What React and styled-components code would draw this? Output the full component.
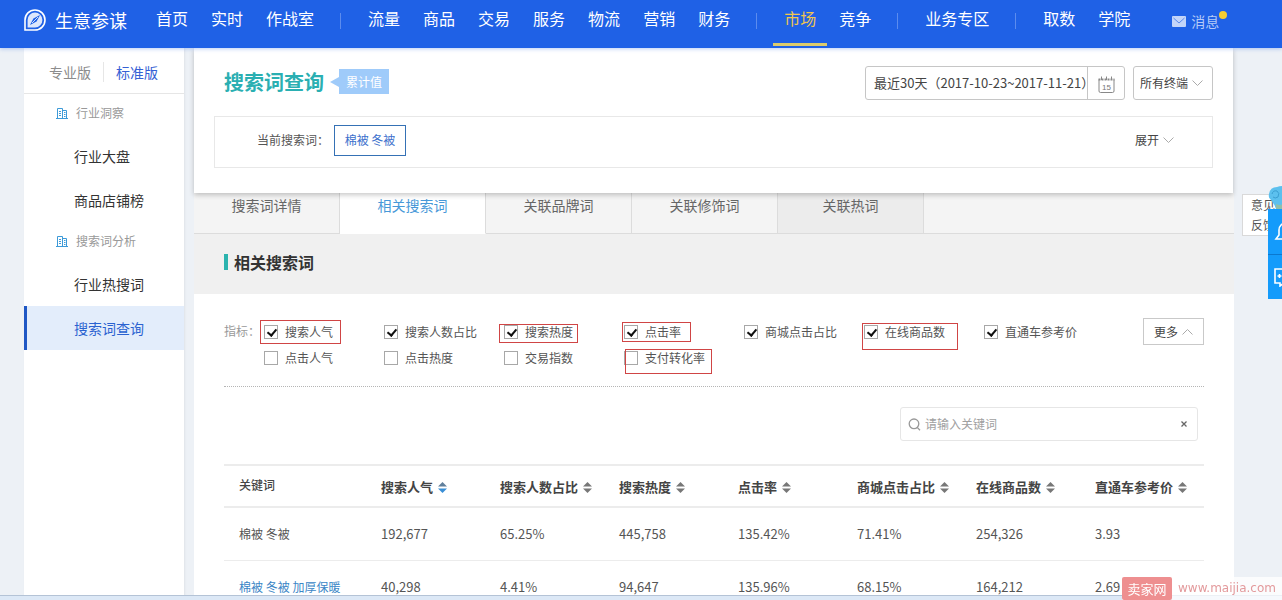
import React, { useState } from 'react';
import styled, { createGlobalStyle } from 'styled-components';

const GlobalStyle = createGlobalStyle`
  * {
    box-sizing: border-box;
  }

  body {
    margin: 0;
    background: #edf1f6;
    color: #333;
    font-family: "Noto Sans CJK SC", sans-serif;
    font-size: 12px;
    line-height: 20px;
  }

  a {
    color: inherit;
    text-decoration: none;
  }

  button, input, select {
    margin: 0;
    padding: 0;
    border: 0;
    background: none;
    color: inherit;
    font: inherit;
  }

  svg {
    display: block;
    flex: none;
  }
`;

const Page = styled.div`
  height: 100vh;
  overflow: hidden;
  display: flex;
  flex-direction: column;
`;

/* ---------- top bar ---------- */

const TopBar = styled.header`
  display: flex;
  flex: none;
  height: 48px;
  padding-left: 24px;
  background: #1f61e6;
  color: #fff;
  white-space: nowrap;
  z-index: 3;
  box-shadow: 0 1px 4px rgba(31, 97, 230, 0.3);
`;

const Logo = styled.a`
  display: flex;
  align-items: center;
  gap: 9px;
  width: 121px;
  height: 40px;
  font-size: 18px;
`;

const Nav = styled.nav`
  display: flex;
  gap: 1px;
`;

const NavItem = styled.a`
  height: 46px;
  padding: 0 11px;
  font-size: 16px;
  line-height: 37px;
  color: ${props => (props.$active ? '#f0c64f' : '#fff')};
  border-bottom: 3px solid ${props => (props.$active ? '#dccb6c' : 'transparent')};
`;

const NavDivider = styled.span`
  width: 1px;
  height: 16px;
  margin: 13px 15px 0 14px;
  background: #5c8cee;
`;

const Message = styled.a`
  position: relative;
  display: flex;
  align-items: center;
  gap: 5px;
  height: 42px;
  margin-left: 31px;
  font-size: 14px;
  color: #b5cbf7;
`;

const Dot = styled.i`
  position: absolute;
  top: 11px;
  right: -8px;
  width: 8px;
  height: 8px;
  border-radius: 50%;
  background: #f5cd30;
`;

/* ---------- side menu ---------- */

const Body = styled.div`
  display: flex;
  flex: 1;
  gap: 10px;
  min-height: 0;
  padding: 0 49px 0 24px;
`;

const Side = styled.aside`
  flex: none;
  width: 160px;
  background: #fff;
  box-shadow: 1px 0 2px rgba(0, 0, 0, 0.06);
`;

const Versions = styled.div`
  display: flex;
  align-items: center;
  height: 46px;
  padding: 2px 0 0 13px;
  border-bottom: 1px solid #e6e6e6;
`;

const Version = styled.a`
  padding: 0 12px;
  font-size: 14px;
  color: ${props => (props.$active ? '#3560d4' : '#8c8c8c')};

  & + & {
    border-left: 1px solid #e6e6e6;
  }
`;

const GroupTitle = styled.div`
  display: flex;
  align-items: center;
  gap: 8px;
  height: 40px;
  padding: 0 0 2px 32px;
  color: #999;
`;

const MenuItem = styled.a`
  display: block;
  height: 44px;
  padding-left: 47px;
  border-left: 3px solid ${props => (props.$active ? '#1f57c4' : 'transparent')};
  background: ${props => (props.$active ? '#e3edfb' : 'transparent')};
  color: ${props => (props.$active ? '#2a62d0' : '#333')};
  font-size: 14px;
  line-height: 44px;
`;

/* ---------- main head ---------- */

const Main = styled.main`
  flex: 1;
  min-width: 0;
  display: flex;
  flex-direction: column;
`;

const Head = styled.section`
  position: relative;
  z-index: 1;
  padding: 18px 20px 25px;
  background: #fff;
  box-shadow: 0 2px 5px rgba(0, 0, 0, 0.22);
`;

const HeadRow = styled.div`
  display: flex;
  align-items: center;
  height: 34px;
  padding-left: 10px;
`;

const TitleGroup = styled.div`
  display: flex;
  align-items: center;
  padding-bottom: 3px;
`;

const PageTitle = styled.h1`
  margin: 0;
  font-size: 20px;
  font-weight: bold;
  color: #2aafb2;
`;

const Badge = styled.span`
  display: flex;
  align-items: center;
  margin-left: 6px;
  color: #fff;

  &::before {
    content: '';
    border: 5px solid transparent;
    border-right: 9px solid #9fcbfa;
    border-left: 0;
  }

  span {
    padding: 0 7px;
    background: #9fcbfa;
    line-height: 25px;
  }
`;

const DateBox = styled.div`
  display: flex;
  width: 260px;
  height: 34px;
  margin-left: auto;
  border: 1px solid #c6c6c6;
  border-radius: 3px;
`;

const DateInput = styled.input`
  flex: 1;
  min-width: 0;
  padding-left: 8px;
  font-size: 13px;
  color: #444;
`;

const CalendarButton = styled.button`
  display: flex;
  align-items: center;
  justify-content: center;
  width: 37px;
  padding-top: 3px;
  border-left: 1px solid #c6c6c6;
`;

const SelectBox = styled.label`
  display: flex;
  align-items: center;
  width: 80px;
  height: 34px;
  margin-left: 8px;
  padding: 0 9px 0 6px;
  border: 1px solid #c6c6c6;
  border-radius: 3px;
`;

const Select = styled.select`
  flex: 1;
  min-width: 0;
  appearance: none;
  color: #444;
`;

const Condition = styled.div`
  display: flex;
  align-items: center;
  height: 52px;
  margin-top: 16px;
  padding: 0 38px 4px 42px;
  border: 1px solid #e8e8e8;
  color: #555;
`;

const Tag = styled.button`
  min-width: 72px;
  height: 31px;
  margin-left: 5px;
  padding: 0 8px;
  border: 1px solid #3571b5;
  color: #3c70cc;
`;

const Expand = styled.button`
  display: flex;
  align-items: center;
  gap: 4px;
  margin-left: auto;
  color: #444;
`;

/* ---------- tabs ---------- */

const Tabs = styled.nav`
  display: flex;
  flex: none;
  height: 41px;
  margin-right: -1px;
  background: #f4f4f4;
  box-shadow: inset 0 -1px #dcdcdc;
`;

const Tab = styled.a`
  width: 146px;
  border-right: 1px solid #dcdcdc;
  border-bottom: 1px solid ${props => (props.$active ? '#fff' : '#dcdcdc')};
  background: ${props => (props.$active ? '#fff' : props.$dark ? '#ececec' : '#f4f4f4')};
  color: ${props => (props.$active ? '#4798d8' : '#666')};
  font-size: 14px;
  line-height: 24px;
  text-align: center;
`;

const SectionTitle = styled.h2`
  display: flex;
  align-items: center;
  gap: 6px;
  flex: none;
  height: 60px;
  margin: 0 -1px 0 0;
  padding: 0 30px 5px;
  background: #f0f0f0;
  font-size: 16px;
  font-weight: bold;

  &::before {
    content: '';
    width: 4px;
    height: 16px;
    background: #2bb3ae;
  }
`;

const Content = styled.section`
  flex: 1;
  margin-right: -1px;
  padding: 24px 30px 0;
  background: #fff;
`;

/* ---------- metrics ---------- */

const Metrics = styled.div`
  display: flex;
  align-items: flex-start;
  height: 69px;
  border-bottom: 1px dotted #b5b5b5;
`;

const MetricsLabel = styled.span`
  width: 40px;
  line-height: 26px;
  color: #999;
`;

const MetricGrid = styled.div`
  display: grid;
  grid-template-columns: repeat(7, 120px);
  grid-auto-rows: 26px;
  padding-top: 1px;
`;

const MetricCell = styled.div`
  position: relative;
`;

const Metric = styled.label`
  display: flex;
  align-items: center;
  gap: 7px;
  height: 26px;
  color: #555;
`;

const Checkbox = styled.input`
  appearance: none;
  width: 14px;
  height: 14px;
  border: 1px solid #a8a8a8;
  background: #fff;

  &:checked::after {
    content: '';
    display: block;
    width: 4px;
    height: 7px;
    margin: 1px 0 0 4px;
    border: solid #111;
    border-width: 0 2px 2px 0;
    transform: rotate(40deg);
  }
`;

// red frame drawn over a recommended metric
const Mark = styled.i`
  position: absolute;
  top: ${props => props.$top}px;
  left: ${props => props.$left}px;
  width: ${props => props.$width}px;
  height: ${props => props.$height}px;
  border: 1px solid #d04545;
  pointer-events: none;
`;

const MoreButton = styled.button`
  display: flex;
  align-items: center;
  justify-content: center;
  gap: 4px;
  width: 61px;
  height: 27px;
  margin-left: auto;
  border: 1px solid #c9c9c9;
  color: #444;
`;

/* ---------- search ---------- */

const SearchBox = styled.label`
  display: flex;
  align-items: center;
  gap: 4px;
  width: 298px;
  height: 34px;
  margin: 20px 6px 23px auto;
  padding: 0 10px 0 7px;
  border: 1px solid #e6e6e6;
  border-radius: 3px;
`;

const SearchInput = styled.input`
  flex: 1;
  min-width: 0;
  outline: none;

  &::placeholder {
    color: #a0a0a0;
  }
`;

const ClearButton = styled.button`
  color: #555;
`;

/* ---------- table ---------- */

const Table = styled.table`
  width: 100%;
  table-layout: fixed;
  border-collapse: collapse;
  font-size: 13px;
  color: #555;
  white-space: nowrap;

  th, td {
    padding: 0;
    text-align: left;
  }

  th {
    width: 119px;
    height: 42px;
    border-top: 2px solid #ececec;
    border-bottom: 2px solid #ececec;
    color: #444;
  }

  th:first-child {
    width: 157px;
    padding: 0 0 2px 15px;
    font-size: 12px;
    font-weight: 500;
  }

  th:last-child {
    width: auto;
  }

  td {
    height: 53px;
    border-bottom: 1px solid #ececec;
  }

  td:first-child {
    padding-left: 15px;
    font-size: 12px;
  }
`;

const SortButton = styled.button`
  display: flex;
  align-items: center;
  gap: 5px;
  padding-top: 2px;
  font-weight: bold;
`;

const KeywordLink = styled.a`
  color: #3b86c6;
`;

/* ---------- floating parts ---------- */

const Float = styled.div`
  position: fixed;
  top: 186px;
  right: 0;
  width: 40px;
  height: 114px;
  overflow: hidden;
`;

const Feedback = styled.a`
  position: absolute;
  top: 8px;
  left: 0;
  width: 42px;
  padding: 0 8px;
  border: 1px solid #d9d9d9;
  background: #fff;
  color: #555;
`;

const FloatTools = styled.div`
  position: absolute;
  top: 0;
  left: 26px;
  width: 44px;
`;

const ToolButton = styled.button`
  display: block;
  width: 44px;
  height: 45px;
  padding-left: 6px;
  background: #149bfb;

  & + & {
    border-top: 1px solid #0b78cf;
  }
`;

const BottomEdge = styled.div`
  position: fixed;
  right: 0;
  bottom: 0;
  left: 0;
  height: 5px;
  border-top: 1px solid #b4c3d6;
  background: #dce8f6;
`;

const Watermark = styled.div`
  position: fixed;
  right: 0;
  bottom: 0;
  display: flex;
  width: 160px;
  height: 23px;
  background: rgba(255, 255, 255, 0.75);
  color: #e39a9c;
  font-family: "DejaVu Sans", sans-serif;
  font-size: 12px;
  line-height: 23px;

  b {
    width: 50px;
    margin-right: 6px;
    border-radius: 2px;
    background: #ee8f90;
    color: #fff;
    font-family: "Noto Sans CJK SC", sans-serif;
    font-size: 13px;
    font-weight: normal;
    text-align: center;
  }
`;

/* ---------- icons ---------- */

const LogoIcon = () => (
  <svg width="22" height="22" viewBox="0 0 22 22" fill="none">
    <path d="M1 21V11A10 10 0 1 1 11 21Z" stroke="#fff" strokeWidth="1.6" />
    <path d="M3.6 18.4V11A7.4 7.4 0 1 1 11 18.4Z" fill="#fff" fillOpacity="0.85" />
    <path d="M16 6L12.6 12.6L6 16L9.4 9.4Z" fill="#1f61e6" />
    <path d="M8 14L14 8" stroke="#fff" strokeWidth="0.8" />
  </svg>
);

const MailIcon = () => (
  <svg width="14" height="11" viewBox="0 0 14 11">
    <rect width="14" height="11" rx="1" fill="#c3d5f9" />
    <path d="M1.5 2L7 7L12.5 2" fill="none" stroke="#5a89ec" />
  </svg>
);

const BuildingIcon = () => (
  <svg width="12" height="12" viewBox="0 0 12 12" fill="none" stroke="#3d9ad8">
    <path d="M0 11.5H12M1.5 11.5V1.5H6.5V11.5M6.5 3.5H10.5V11.5M3 4.5H5M3 6.5H5M3 8.5H5M8 5.5H9.5M8 7.5H9.5M8 9.5H9.5" />
  </svg>
);

const Chevron = ({ up }) => (
  <svg width="11" height="6" viewBox="0 0 11 6" fill="none" stroke="#aaa">
    <path d={up ? 'M0.5 5.5L5.5 0.5L10.5 5.5' : 'M0.5 0.5L5.5 5.5L10.5 0.5'} />
  </svg>
);

const CalendarIcon = () => (
  <svg width="17" height="17" viewBox="0 0 17 17" fill="none" stroke="#888">
    <path d="M1 3.5V15Q1 16.5 2.5 16.5H14.5Q16 16.5 16 15V3.5" />
    <path d="M0.5 3.5H16.5" strokeWidth="2" strokeDasharray="2 1" />
    <path d="M3.5 0.5V4M8.5 0.5V4M13.5 0.5V4" />
    <text x="8.5" y="14" fontSize="8" textAnchor="middle" fill="#777" stroke="none" fontFamily="Liberation Sans, sans-serif">15</text>
  </svg>
);

const SearchIcon = () => (
  <svg width="13" height="13" viewBox="0 0 13 13" fill="none" stroke="#999" strokeWidth="1.3">
    <circle cx="6" cy="5.8" r="4.8" />
    <path d="M9.2 9.4L12 12.3" />
  </svg>
);

const ClearIcon = () => (
  <svg width="6" height="6" viewBox="0 0 6 6" stroke="#666" strokeWidth="1.3">
    <path d="M0.5 0.5L5.5 5.5M5.5 0.5L0.5 5.5" />
  </svg>
);

const SortIcon = ({ active }) => (
  <svg width="9" height="11" viewBox="0 0 9 11">
    <path d="M4.5 0L9 4.5H0Z" fill={active ? '#607f9c' : '#777'} />
    <path d="M4.5 11L0 6.5H9Z" fill={active ? '#3a8fd6' : '#777'} />
  </svg>
);

const ElephantIcon = () => (
  <svg width="30" height="23" viewBox="0 0 30 23">
    <path d="M1 8Q2 1 9 1Q14 -1 20 1Q28 3 28 12V23H8Q7 19 3 14Q0 12 1 8Z" fill="#5cc0ee" />
    <path d="M4 8Q5 4 9 5Q12 7 10 11Q7 13 5 11" fill="none" stroke="#3a9fd2" />
    <path d="M8 18Q12 20 15 18V23H8Z" fill="#90bfa9" />
  </svg>
);

const BellIcon = () => (
  <svg width="24" height="24" viewBox="0 0 24 24" fill="none" stroke="#fff" strokeWidth="1.6">
    <path d="M2 19H22L19 15V10A7 7 0 0 0 5 10V15ZM9 20Q12 24 15 20" />
  </svg>
);

const ChatIcon = () => (
  <svg width="24" height="20" viewBox="0 0 24 20" fill="none" stroke="#fff" strokeWidth="1.6">
    <path d="M1 2H22V16H10L6 19V16H1Z" />
    <path d="M5.5 7V11M3.5 9H7.5M11 9H18" />
  </svg>
);

/* ---------- data ---------- */

const navGroups = [
  ['首页', '实时', '作战室'],
  ['流量', '商品', '交易', '服务', '物流', '营销', '财务'],
  ['市场', '竞争'],
  ['业务专区'],
  ['取数', '学院'],
];

const menu = [
  { title: '行业洞察', items: ['行业大盘', '商品店铺榜'] },
  { title: '搜索词分析', items: ['行业热搜词', '搜索词查询'] },
];

const tabs = ['搜索词详情', '相关搜索词', '关联品牌词', '关联修饰词', '关联热词'];

const metrics = [
  { name: '搜索人气', on: true, mark: [1, -4, 81, 24] },
  { name: '搜索人数占比', on: true },
  { name: '搜索热度', on: true, mark: [5, -5, 79, 19] },
  { name: '点击率', on: true, mark: [3, -2, 69, 20] },
  { name: '商城点击占比', on: true },
  { name: '在线商品数', on: true, mark: [4, -2, 96, 27] },
  { name: '直通车参考价', on: true },
  { name: '点击人气' },
  { name: '点击热度' },
  { name: '交易指数' },
  { name: '支付转化率', mark: [4, 1, 87, 25] },
];

const columns = ['搜索人气', '搜索人数占比', '搜索热度', '点击率', '商城点击占比', '在线商品数', '直通车参考价'];

const rows = [
  ['棉被 冬被', '192,677', '65.25%', '445,758', '135.42%', '71.41%', '254,326', '3.93'],
  ['棉被 冬被 加厚保暖', '40,298', '4.41%', '94,647', '135.96%', '68.15%', '164,212', '2.69'],
];

const MetricItem = ({ name, on = false, mark }) => {
  const [checked, setChecked] = useState(on);

  return (
    <MetricCell>
      <Metric>
        <Checkbox type="checkbox" checked={checked} onChange={() => setChecked(!checked)} />
        {name}
      </Metric>
      {mark && <Mark $top={mark[0]} $left={mark[1]} $width={mark[2]} $height={mark[3]} />}
    </MetricCell>
  )
}

const App = () => {
  const [keyword, setKeyword] = useState('');

  return (
    <Page>
      <GlobalStyle />
      <TopBar>
        <Logo href="#"><LogoIcon />生意参谋</Logo>
        <Nav>
          {navGroups.map((group, i) => (
            <React.Fragment key={i}>
              {i > 0 && <NavDivider />}
              {group.map(name => (
                <NavItem key={name} href="#" $active={name === '市场'}>{name}</NavItem>
              ))}
            </React.Fragment>
          ))}
        </Nav>
        <Message href="#"><MailIcon />消息<Dot /></Message>
      </TopBar>

      <Body>
        <Side>
          <Versions>
            <Version href="#">专业版</Version>
            <Version href="#" $active>标准版</Version>
          </Versions>
          {menu.map(group => (
            <div key={group.title}>
              <GroupTitle><BuildingIcon />{group.title}</GroupTitle>
              {group.items.map(name => (
                <MenuItem key={name} href="#" $active={name === '搜索词查询'}>{name}</MenuItem>
              ))}
            </div>
          ))}
        </Side>

        <Main>
          <Head>
            <HeadRow>
              <TitleGroup>
                <PageTitle>搜索词查询</PageTitle>
                <Badge><span>累计值</span></Badge>
              </TitleGroup>
              <DateBox>
                <DateInput readOnly aria-label="日期" value="最近30天（2017-10-23~2017-11-21）" />
                <CalendarButton aria-label="选择日期"><CalendarIcon /></CalendarButton>
              </DateBox>
              <SelectBox>
                <Select aria-label="终端">
                  <option>所有终端</option>
                </Select>
                <Chevron />
              </SelectBox>
            </HeadRow>
            <Condition>
              当前搜索词：
              <Tag>棉被 冬被</Tag>
              <Expand>展开<Chevron /></Expand>
            </Condition>
          </Head>

          <Tabs>
            {tabs.map(name => (
              <Tab key={name} href="#" $active={name === '相关搜索词'} $dark={name === '关联热词'}>{name}</Tab>
            ))}
          </Tabs>
          <SectionTitle>相关搜索词</SectionTitle>

          <Content>
            <Metrics>
              <MetricsLabel>指标：</MetricsLabel>
              <MetricGrid>
                {metrics.map(metric => <MetricItem key={metric.name} {...metric} />)}
              </MetricGrid>
              <MoreButton>更多<Chevron up /></MoreButton>
            </Metrics>

            <SearchBox>
              <SearchIcon />
              <SearchInput
                aria-label="关键词"
                placeholder="请输入关键词"
                value={keyword}
                onChange={e => setKeyword(e.target.value)}
              />
              <ClearButton aria-label="清空" onClick={() => setKeyword('')}><ClearIcon /></ClearButton>
            </SearchBox>

            <Table>
              <thead>
                <tr>
                  <th>关键词</th>
                  {columns.map((name, i) => (
                    <th key={name}>
                      <SortButton>{name}<SortIcon active={i === 0} /></SortButton>
                    </th>
                  ))}
                </tr>
              </thead>
              <tbody>
                {rows.map(([word, ...values], i) => (
                  <tr key={word}>
                    <td>{i === 0 ? word : <KeywordLink href="#">{word}</KeywordLink>}</td>
                    {values.map(value => <td key={value}>{value}</td>)}
                  </tr>
                ))}
              </tbody>
            </Table>
          </Content>
        </Main>
      </Body>

      <Float>
        <Feedback href="#">意见反馈</Feedback>
        <FloatTools>
          <ElephantIcon />
          <ToolButton aria-label="通知"><BellIcon /></ToolButton>
          <ToolButton aria-label="客服"><ChatIcon /></ToolButton>
        </FloatTools>
      </Float>
      <BottomEdge />
      <Watermark><b>卖家网</b>www.maijia.com</Watermark>
    </Page>
  )
}

export default App
